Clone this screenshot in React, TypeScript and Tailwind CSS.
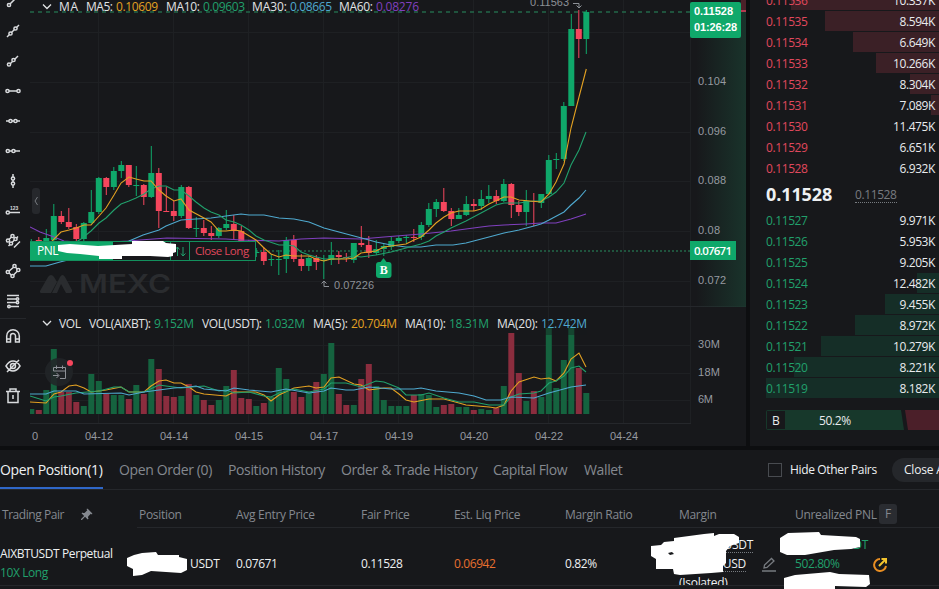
import type { ReactNode } from "react";
import { MdPushPin } from "react-icons/md";

const UP = "#0fa86a";
const DOWN = "#f6465d";

// [direction, high, bodyTop, bodyBottom, low, volumeTop]
type Candle = [1 | 0, number, number, number, number, number];

const candles: Candle[] = [
  [1, 239, 241, 246, 250, 409], [0, 237, 240, 247, 250, 410], [1, 229, 238, 250, 255, 390],
  [1, 204, 216, 240, 244, 349], [0, 211, 216, 222, 224, 392], [0, 208, 222, 227, 229, 392],
  [0, 224, 227, 239, 241, 402], [1, 222, 223, 239, 241, 406], [1, 190, 212, 223, 225, 374],
  [1, 177, 178, 212, 214, 381], [0, 177, 178, 187, 195, 394], [1, 167, 171, 187, 190, 395],
  [1, 161, 165, 171, 178, 395], [0, 165, 165, 185, 187, 399], [1, 166, 185, 186, 196, 385],
  [0, 184, 185, 197, 205, 394], [1, 146, 173, 197, 198, 359], [0, 168, 173, 211, 228, 369],
  [0, 187, 211, 212, 212, 396], [0, 201, 211, 216, 221, 397], [1, 185, 187, 216, 218, 396],
  [0, 186, 187, 228, 229, 384], [1, 217, 228, 229, 237, 395], [0, 220, 228, 233, 236, 400],
  [0, 226, 233, 236, 240, 405], [1, 227, 228, 236, 238, 400], [1, 210, 224, 228, 230, 386],
  [0, 215, 224, 231, 240, 370], [0, 226, 231, 241, 246, 398], [0, 240, 244, 252, 256, 399],
  [1, 248, 252, 253, 257, 406], [0, 247, 252, 261, 265, 403], [1, 254, 259, 260, 266, 397],
  [1, 250, 259, 260, 275, 368], [1, 237, 240, 259, 273, 379], [0, 235, 240, 259, 262, 392],
  [0, 254, 259, 266, 271, 397], [1, 256, 258, 266, 271, 393], [0, 255, 258, 262, 270, 382],
  [1, 255, 260, 261, 279, 374], [1, 242, 255, 260, 265, 343], [0, 251, 255, 257, 264, 394],
  [0, 253, 257, 258, 262, 405], [1, 243, 243, 260, 263, 405], [0, 226, 243, 245, 247, 379],
  [0, 236, 245, 253, 258, 364], [1, 240, 249, 253, 255, 386], [1, 244, 246, 249, 256, 400],
  [1, 237, 241, 247, 250, 406], [1, 236, 238, 241, 243, 406], [1, 235, 237, 238, 243, 406],
  [0, 229, 237, 238, 242, 395], [1, 222, 225, 237, 240, 394], [1, 203, 209, 225, 227, 395],
  [1, 199, 202, 209, 217, 407], [0, 188, 202, 211, 212, 405], [0, 208, 211, 219, 226, 404],
  [1, 208, 215, 219, 219, 407], [1, 196, 204, 215, 216, 407], [0, 199, 204, 206, 211, 410],
  [1, 190, 199, 206, 210, 409], [1, 185, 196, 199, 203, 410], [0, 190, 196, 201, 204, 408],
  [1, 179, 184, 201, 202, 386], [0, 183, 184, 205, 218, 333], [0, 201, 205, 212, 216, 373],
  [1, 190, 201, 212, 226, 401], [0, 193, 201, 202, 226, 391], [1, 194, 194, 203, 208, 397],
  [1, 155, 160, 194, 195, 328], [1, 153, 159, 160, 169, 388], [1, 102, 106, 159, 161, 360],
  [1, 14, 29, 106, 106, 328], [0, 10, 29, 39, 58, 368], [1, 10, 12, 39, 54, 393],
];

const lines = [
  { color: "#8040bf", points: "30,227 40,232 54,237 64,241 90,243 129,241 140,240 167,238 226,239 241,240 279,241 301,239 324,238 361,239 384,237 421,234 451,231 481,227 489,226 504,225 526,224 541,223 556,223 571,219 586,214" },
  { color: "#4fa9cf", points: "30,266 46,266 60,262 80,257 110,248 129,241 143,235 159,230 166,226 181,220 196,219 211,218 226,216 241,214 249,215 264,215 279,218 294,219 309,222 324,228 339,232 354,236 369,240 376,242 391,245 406,247 421,247 436,245 453,245 466,243 489,237 504,233 519,230 534,226 541,224 549,220 564,212 571,205 579,198 586,190" },
  { color: "#21a06c", points: "70,246 81,239 91,231 99,223 106,218 114,210 121,204 129,201 136,198 144,194 151,189 159,186 166,186 174,190 181,190 189,196 196,202 204,208 211,212 219,215 226,220 234,222 241,225 249,230 256,236 264,240 279,245 286,245 294,246 301,252 309,255 324,259 339,259 354,256 361,257 376,255 391,252 406,248 421,244 429,241 436,236 444,232 451,228 466,221 481,213 496,205 504,203 519,203 534,201 541,201 549,197 556,192 564,183 571,165 579,150 586,132" },
  { color: "#e3a122", points: "47,247 52,241 61,232 69,230 76,228 84,225 91,225 99,216 106,208 114,195 121,183 129,177 136,179 144,181 151,181 159,190 166,196 174,201 181,199 189,210 204,218 211,222 219,231 226,231 234,230 241,231 256,240 264,248 271,254 279,257 286,255 294,256 309,256 316,259 324,261 331,259 346,259 354,258 361,253 376,251 384,247 391,246 406,244 414,240 421,237 429,230 436,223 444,217 451,213 459,211 474,211 481,209 489,204 504,197 511,197 519,200 541,202 549,194 556,182 564,164 571,128 579,97 586.3,69" },
  { color: "#e3a122", points: "30,402 46,403 54,394 61,392 69,386 76,385 84,388 91,392 99,391 106,390 121,387 129,392 144,392 151,386 159,381 166,380 174,383 181,383 189,387 196,392 204,394 226,396 234,392 256,392 264,395 271,401 279,395 294,388 309,386 316,388 324,387 331,378 339,377 354,384 361,385 369,390 384,388 391,388 399,394 406,400 414,402 429,399 444,399 459,403 466,405 489,407 496,408 504,405 511,391 519,382 534,377 541,379 549,378 556,381 564,373 571,359 579,353 586,367" },
  { color: "#21a06c", points: "30,396 46,401 54,397 61,396 76,393 99,391 114,387 121,387 129,392 144,392 159,385 166,386 181,388 204,386 219,391 226,390 234,393 249,392 264,396 271,397 279,393 294,389 309,392 324,389 331,383 346,383 361,387 376,381 384,382 399,388 406,395 421,395 429,393 444,398 459,402 474,402 489,405 504,405 511,397 519,394 534,393 541,391 549,383 556,381 564,376 571,368 579,366 586,372" },
  { color: "#4fa9cf", points: "30,394 46,394 54,391 76,391 84,394 121,393 129,395 144,392 159,390 174,388 189,387 196,386 204,389 226,391 234,388 249,390 271,392 286,389 309,393 324,391 331,388 346,390 354,390 369,387 391,389 414,389 421,388 436,391 459,393 474,396 486,400 501,400 511,397 534,398 549,393 571,387 586,385" },
];

// [text, x, width, color]
type Legend = [string, number, number, string];

const maLegend: Legend[] = [
  ["MA", 59, 19, "#e1e3e5"],
  ["MA5:", 86, 27, "#e1e3e5"], ["0.10609", 116, 42, "#e3a122"],
  ["MA10:", 166, 34, "#e1e3e5"], ["0.09603", 203, 42, "#21a06c"],
  ["MA30:", 252, 35, "#e1e3e5"], ["0.08665", 290, 42, "#4fa9cf"],
  ["MA60:", 339, 34, "#e1e3e5"], ["0.08276", 376, 43, "#8040bf"],
];

const volLegend: Legend[] = [
  ["VOL", 59, 22, "#e1e3e5"],
  ["VOL(AIXBT):", 89, 62, "#e1e3e5"], ["9.152M", 154, 40, "#21a06c"],
  ["VOL(USDT):", 202, 60, "#e1e3e5"], ["1.032M", 265, 40, "#21a06c"],
  ["MA(5):", 313, 35, "#e1e3e5"], ["20.704M", 351, 46, "#e3a122"],
  ["MA(10):", 405, 41, "#e1e3e5"], ["18.31M", 449, 40, "#21a06c"],
  ["MA(20):", 497, 41, "#e1e3e5"], ["12.742M", 541, 46, "#4fa9cf"],
];

const priceAxis: [string, number, number][] = [
  ["0.104", 81, 28], ["0.096", 131, 28], ["0.088", 180, 28], ["0.08", 230, 22],
  ["0.072", 280, 28], ["30M", 344, 22], ["18M", 372, 22], ["6M", 399, 15],
];

const dateAxis: [string, number][] = [
  ["04-12", 99], ["04-14", 174], ["04-15", 249], ["04-17", 324],
  ["04-19", 399], ["04-20", 474], ["04-22", 549], ["04-24", 624],
];

const LegendRow = ({ items, y }: { items: Legend[]; y: number }) => (
  <g fontSize="12" className="font-['Open_Sans',sans-serif]">
    {items.map(([text, x, w, color]) => (
      <text key={x} x={x} y={y} fill={color} textLength={w} fontWeight={color === "#e1e3e5" ? 500 : 400}>
        {text}
      </text>
    ))}
  </g>
);

const Chart = () => (
  <svg width="716" height="446" viewBox="30 0 716 446" className="block font-['Liberation_Sans',Arial,sans-serif]">
    <defs>
      <linearGradient id="depth" x1="0" x2="1" y1="0" y2="0">
        <stop offset="0" stopColor="#1a3a2f" stopOpacity="0" />
        <stop offset="1" stopColor="#1a3a2f" stopOpacity="0.8" />
      </linearGradient>
    </defs>

    {/* Grid */}
    <g stroke="#1e2023" shapeRendering="crispEdges">
      {[99, 174, 249, 324, 399, 474, 549, 624, 691].map((x) => (
        <line key={x} x1={x - 0.5} x2={x - 0.5} y1="0" y2="423" />
      ))}
      {[32, 82, 132, 181, 231, 281, 345, 373, 400].map((y) => (
        <line key={y} x1="30" x2="691" y1={y + 0.5} y2={y + 0.5} />
      ))}
      <line x1="30" x2="746" y1="306.5" y2="306.5" stroke="#25272b" />
      <line x1="30" x2="691" y1="423.5" y2="423.5" stroke="#25272b" />
    </g>
    <rect x="696" y="12" width="50" height="295" fill="url(#depth)" />
    <rect x="741" y="0" width="5" height="10" fill="#4b2129" />
    <rect x="741" y="10" width="5" height="2" fill="#b53a50" />

    {/* Watermark */}
    <g fill="#2a2c2f">
      <path d="M40 291 L48 277 Q51 273 54 277 L57 282 L51 293 H42 Q39.500 293 40 291Z" />
      <path d="M52 293 L60 277 Q62.500 273 65 277 L72 290 Q72.500 293 70 293 H66 L61 284 L57 293Z" />
      <text x="79" y="293" fontSize="25" fontWeight="600" textLength="92" lengthAdjust="spacingAndGlyphs" className="font-[Inter,sans-serif]">
        MEXC
      </text>
    </g>

    {/* Volume */}
    {candles.map(([up, , , , , top], i) => (
      <rect key={i} x={28.3 + i * 7.5} y={top} width="6" height={414 - top} fill={up ? "#15633f" : "#8b2d3e"} />
    ))}
    <rect x="545" y="328" width="42" height="7" fill="#17181b" opacity="0.4" />

    {/* Price markers */}
    <line x1="30" x2="691" y1="12" y2="12" stroke="#23674a" strokeWidth="1.500" strokeDasharray="4 4" />
    <line x1="256" x2="691" y1="251" y2="251" stroke="#23674a" strokeWidth="1.500" strokeDasharray="2 2" />

    {/* Candles */}
    {candles.map(([up, high, top, bottom, low], i) => {
      const cx = 31.3 + i * 7.5;
      return (
        <g key={i} fill={up ? UP : DOWN}>
          <rect x={cx - 0.5} y={high} width="1" height={low - high} />
          <rect x={cx - 3} y={top} width="6" height={Math.max(1, bottom - top)} />
        </g>
      );
    })}

    {lines.map((l) => (
      <polyline key={l.points} points={l.points} fill="none" stroke={l.color} strokeWidth="1.100" />
    ))}

    {/* High and low notes */}
    <g fill="#8d9197" fontSize="11">
      <text x="530" y="6" textLength="39">0.11563</text>
      <text x="334" y="289" textLength="40">0.07226</text>
      <path d="M573 3.500H579V8M576.500 5.500L579 8L581.500 5.500M329 286.500H324V281M321.500 283.500L324 281L326.500 283.500" fill="none" stroke="#8d9197" />
    </g>

    <LegendRow items={maLegend} y={11} />
    <LegendRow items={volLegend} y={328} />
    <path d="M43 4.500L47 8.500L51 4.500M43 321L47 325L51 321" fill="none" stroke="#e1e3e5" strokeWidth="1.300" />

    {/* Axes */}
    <g fill="#969aa0" fontSize="11">
      {priceAxis.map(([text, y, w]) => (
        <text key={text} x="698" y={y + 4} textLength={w}>{text}</text>
      ))}
      {dateAxis.map(([text, x]) => (
        <text key={text} x={x - 14} y="440" textLength="28">{text}</text>
      ))}
      <text x="32" y="440">0</text>
    </g>

    {/* Current and entry price tags */}
    <rect x="690" y="2" width="51" height="36" rx="2" fill={UP} />
    <rect x="690" y="241" width="46" height="19" fill={UP} />
    <g fill="#fff" fontSize="11" fontWeight="700">
      <text x="694" y="15" textLength="39">0.11528</text>
      <text x="694" y="31" textLength="43">01:26:28</text>
      <text x="694" y="254.500" fontSize="11.500" fontWeight="600" textLength="38" className="font-['Open_Sans',sans-serif]">0.07671</text>
    </g>

    {/* Buy marker */}
    <path d="M383.500 258L386.500 262H380.500Z" fill={UP} />
    <rect x="376" y="262" width="15.500" height="16" rx="3" fill={UP} />
    <text x="383.700" y="273.500" fill="#fff" fontSize="12" fontWeight="700" textAnchor="middle" className="font-['Liberation_Serif',serif]">B</text>

    {/* Collapse handle */}
    <rect x="32" y="188" width="8" height="26" rx="3" fill="#26282c" />
    <path d="M37.500 197L35 201L37.500 205" fill="none" stroke="#777b80" />

    {/* Event badge */}
    <circle cx="59" cy="372" r="14" fill="#222428" fillOpacity="0.88" />
    <path d="M53.500 371V367.500H65.500V378.500H60M53.500 371H65.500M56.500 365.500V369M62.500 365.500V369M53 375.500H58.500M56.500 373L59 375.500L56.500 378" fill="none" stroke="#8d9197" />
    <circle cx="70" cy="363" r="3" fill={DOWN} />
  </svg>
);

// Entry line label with its order controls
const PositionTag = () => (
  <div className="absolute left-[30px] top-[241px] flex h-5 w-[226px] border-y border-r border-[#13905d] bg-[#17181b] font-['Open_Sans',sans-serif] text-[12px] leading-[18px]">
    <div className="w-[83px] bg-[#0fa86a] pl-[7px] tracking-[-0.5px] text-white">PNL</div>
    <div className="w-[57px]" />
    <div className="flex w-5 items-center justify-center border-x border-[#13905d]">
      <svg width="14" height="14" viewBox="0 0 14 14" fill="none" stroke="#21a06c">
        <path d="M4.500 12V3M2 5.500L4.500 3L6.500 5.500M10 3V12M8 9.500L10 12L12.500 9.500" />
      </svg>
    </div>
    <div className="flex-1 whitespace-nowrap pl-[5px] text-[11.5px] tracking-[-0.45px] text-[#e0485d]">Close Long</div>
    <svg width="120" height="20" viewBox="58 241 120 20" className="absolute left-[28px] -top-px">
      <path fill="#fff" d="M58 245L70 244L98 246L132 244V241H163L166 243L176 244V252L173 253V256L168 257L150 256H122V259H99V256L80 254L67 253L58 251Z" />
    </svg>
  </div>
);

const Tool = ({ children }: { children: ReactNode }) => (
  <div className="flex h-[30px] w-[26px] shrink-0 items-center justify-center">
    <svg width="16" height="16" viewBox="0 0 16 16" fill="none" stroke="#d9dbde" strokeWidth="1.500">
      {children}
    </svg>
  </div>
);

const Dot = ({ x, y }: { x: number; y: number }) => <circle cx={x} cy={y} r="1.600" fill="#17181b" />;

const Toolbar = () => (
  <div className="-mt-[14px] h-[460px] w-[30px] shrink-0">
    <Tool><path d="M5 11L14 2" /><Dot x={4} y={12} /></Tool>
    <Tool><path d="M2 14L14 2" /><Dot x={5.5} y={10.5} /><Dot x={10.5} y={5.5} /></Tool>
    <Tool><path d="M4 12L13 3" /><Dot x={4} y={11.5} /><Dot x={8.5} y={7} /></Tool>
    <Tool><path d="M3 8H13" /><Dot x={2.5} y={8} /><Dot x={13.5} y={8} /></Tool>
    <Tool><path d="M1 8H15" /><Dot x={5.5} y={8} /><Dot x={10.5} y={8} /></Tool>
    <Tool><path d="M3 8H15" /><Dot x={2.8} y={8} /><Dot x={8.5} y={8} /></Tool>
    <Tool><path d="M8 1V15" /><Dot x={8} y={5.5} /><Dot x={8} y={10.5} /></Tool>
    <Tool>
      <path d="M3 9.500H15" /><Dot x={2.8} y={9.5} />
      <text x="5" y="7" fill="#d9dbde" stroke="none" fontSize="5" fontWeight="700" className="font-['Liberation_Sans',sans-serif]">123</text>
    </Tool>
    {/* Parallel channel */}
    <Tool>
      <path d="M1.500 9L8 2.500M3.500 13L13 3.500M9 14.500L15 8.500" />
      <Dot x={3} y={7.5} /><Dot x={7.5} y={3} /><Dot x={6} y={10.5} /><Dot x={10.5} y={6} />
    </Tool>
    {/* Parallelogram */}
    <Tool>
      <path d="M3 9L9.500 3.500L13.500 7L7.500 13Z" />
      <Dot x={9.5} y={3} /><Dot x={13.3} y={7} /><Dot x={2.8} y={9} /><Dot x={7.5} y={13} />
    </Tool>
    <Tool>
      <path d="M2 2.500H14M2 6H14M2 9.500H14M2 13.500H14" /><circle cx="12.500" cy="6" r="1.200" fill="#17181b" /><circle cx="12.500" cy="9.500" r="1.200" fill="#17181b" /><circle cx="4" cy="13.500" r="1.200" fill="#17181b" />
    </Tool>
    <div className="my-[2px] h-px w-[26px] bg-[#25272b]" />
    <Tool>
      <path d="M1.700 14V8A6.300 6.300 0 0 1 14.300 8V14H10.500V8A2.500 2.500 0 0 0 5.500 8V14ZM1.700 11H5.500M10.500 11H14.300" />
    </Tool>
    <Tool>
      <path d="M1 8Q4 3 8 3Q12 3 15 8Q12 13 8 13Q4 13 1 8ZM14 2L2 14" /><circle cx="8" cy="8" r="2.500" />
    </Tool>
    <Tool>
      <path d="M1 3.500H15M5 3V1H11V3M3 3.500V14.500H13V3.500M8 7V11" />
    </Tool>
  </div>
);

// [price, size, left edge of the depth bar]
const asks: [string, string, number][] = [
  ["0.11536", "10.337K", 41], ["0.11535", "8.594K", 75], ["0.11534", "6.649K", 103],
  ["0.11533", "10.266K", 126], ["0.11532", "8.304K", 160], ["0.11531", "7.089K", 181],
  ["0.11530", "11.475K", 189], ["0.11529", "6.651K", 189], ["0.11528", "6.932K", 189],
];

const bids: [string, string, number][] = [
  ["0.11527", "9.971K", 189], ["0.11526", "5.953K", 189], ["0.11525", "9.205K", 189],
  ["0.11524", "12.482K", 167], ["0.11523", "9.455K", 135], ["0.11522", "8.972K", 105],
  ["0.11521", "10.279K", 71], ["0.11520", "8.221K", 44], ["0.11519", "8.182K", 16],
];

const BookRow = ({ row, side }: { row: [string, string, number]; side: "ask" | "bid" }) => (
  <div className="relative mb-px flex h-5 shrink-0 items-center justify-between pl-4 pr-1 pt-[2px] text-[12px] tracking-[-0.4px]">
    <div
      className={`absolute right-0 top-0 h-full ${side === "ask" ? "bg-[#3b2026]" : "bg-[#152e27]"}`}
      style={{ width: 189 - row[2] }}
    />
    <span className={`relative ${side === "ask" ? "text-[#e0485d]" : "text-[#21a06c]"}`}>{row[0]}</span>
    <span className="relative font-medium text-[#e9ebed]">{row[1]}</span>
  </div>
);

const OrderBook = () => (
  <div className="flex h-[446px] w-[189px] flex-col overflow-hidden bg-[#17181b]">
    <div className="-mt-[10px]">
      {asks.map((r) => <BookRow key={r[0]} row={r} side="ask" />)}
    </div>
    <div className="flex h-[31px] items-center pl-4">
      <span className="w-[89px] text-[18px] font-bold tracking-[-0.1px] text-[#eef0f2]">0.11528</span>
      <span className="border-b border-dotted border-[#777b80] text-[12px] leading-[15px] tracking-[-0.4px] text-[#777b80]">0.11528</span>
    </div>
    <div>
      {bids.map((r) => <BookRow key={r[0]} row={r} side="bid" />)}
    </div>
    <div className="relative ml-4 mt-[11px] h-5">
      <svg width="173" height="20" viewBox="0 0 173 20" className="block">
        <path d="M0 2Q0 0 2 0H135L138 20H2Q0 20 0 18Z" fill="#17382b" />
        <path d="M139 0H173V20H142Z" fill="#4b1f29" />
        <rect x="1" y="1" width="18" height="18" fill="#17181b" />
      </svg>
      <div className="absolute inset-0 flex items-center pt-px text-[12px] font-medium tracking-[-0.4px] text-[#e9ebed]">
        <span className="w-[53px] pl-[6px]">B</span>
        <span>50.2%</span>
      </div>
    </div>
  </div>
);

const tabs: [string, string][] = [
  ["Open Order (0)", "w-[109px]"],
  ["Position History", "w-[113px]"],
  ["Order & Trade History", "w-[152px]"],
  ["Capital Flow", "w-[91px]"],
  ["Wallet", "w-[50px]"],
];

const Positions = () => (
  <div className="relative h-[139px] overflow-hidden whitespace-nowrap bg-[#17181b] text-[12px] tracking-[-0.3px]">
    {/* Tabs */}
    <div className="flex h-[40px] items-center border-b border-[#25272b] text-[14px] tracking-[-0.37px] text-[#84888f]">
      <div className="flex h-[39px] w-[103px] shrink-0 items-center border-b-2 border-[#2f67c8] pt-[2px] text-[#eef0f2]">Open Position(1)</div>
      <div className="ml-4 flex shrink-0">
        {tabs.map(([label, width]) => <span key={label} className={width}>{label}</span>)}
      </div>
      <div className="ml-[134px] size-[14px] shrink-0 border border-[#484b50]" />
      <span className="ml-2 w-[102px] shrink-0 pt-px text-[12px] tracking-[-0.35px] text-[#eef0f2]">Hide Other Pairs</span>
      <button className="h-6 w-[90px] shrink-0 rounded-full bg-[#25272b] pl-3 text-left text-[12px] tracking-[-0.2px] text-[#eef0f2]">Close All</button>
    </div>

    {/* Column titles */}
    <div className="flex h-[38px] text-[#84888f]">
      <div className="flex w-[137px] items-center pl-[2px] pt-[12px]">
        <span className="w-[76px] tracking-[-0.45px]">Trading Pair</span>
        <MdPushPin size={15} className="rotate-45 text-[#84888f]" />
      </div>
      <div className="flex flex-1 items-center border-b border-[#25272b] pl-[2px] pt-[13px]">
        <span className="w-[97px]">Position</span>
        <span className="w-[125px]">Avg Entry Price</span>
        <span className="w-[93px]">Fair Price</span>
        <span className="w-[111px]">Est. Liq Price</span>
        <span className="w-[114px]">Margin Ratio</span>
        <span className="w-[116px]">Margin</span>
        <span className="w-[84px]">Unrealized PNL</span>
        <span className="-mt-[2px] flex h-5 w-[18px] items-center justify-center rounded-[3px] bg-[#2a2c31]">F</span>
      </div>
    </div>

    {/* Position row */}
    <div className="flex h-[58px] overflow-hidden border-b border-[#25272b] text-[#eef0f2]">
      <div className="w-[137px] pt-[16px] leading-[19px]">
        <div className="tracking-[-0.4px]">AIXBTUSDT Perpetual</div>
        <div className="tracking-[-0.4px] text-[#21a06c]">10X Long</div>
      </div>
      <div className="flex pt-[26px] leading-[19px]">
        <span className="w-[99px] pl-[53px]">USDT</span>
        <span className="w-[125px] tracking-[-0.4px]">0.07671</span>
        <span className="w-[93px] tracking-[-0.4px]">0.11528</span>
        <span className="w-[111px] tracking-[-0.4px] text-[#e8702f]">0.06942</span>
        <span className="w-[114px] tracking-[-0.4px]">0.82%</span>
      </div>
      <div className="w-[83px] pt-[9px] leading-[15px]">
        <div className="w-[74px] border-b border-dotted border-[#777b80] text-right">USDT</div>
        <div className="mt-[3px] w-[67px] border-b border-dotted border-[#777b80] text-right">USD</div>
        <div className="mt-[3px]">(Isolated)</div>
      </div>
      <svg width="14" height="15" viewBox="0 0 14 15" fill="none" stroke="#777b80" strokeWidth="1.300" className="mt-[29px]">
        <path d="M0 14H14M2 11L2.500 8L9.500 1.500L12 4L5 10.500Z" />
      </svg>
      <div className="ml-[19px] w-[77px] pt-[7px] leading-[19px] text-[#21a06c]">
        <div className="w-[73px] text-right">USDT</div>
        <div className="tracking-[-0.4px]">502.80%</div>
      </div>
      <svg width="16" height="16" viewBox="0 0 16 16" fill="none" stroke="#e98e22" strokeWidth="2" className="mt-[29px]">
        <path d="M8 2A6 6 0 1 0 14 9" />
        <path d="M7 9L13 3M9.500 2H14V6.500" stroke="#f2c32e" />
      </svg>
    </div>

    {/* Masked amounts */}
    <svg width="939" height="139" viewBox="0 450 939 139" className="pointer-events-none absolute left-0 top-0" fill="#fff">
      <path d="M127 558L134 555L142 553L156 552L158 555H179V557L187 559V570L181 573L151 571L142 575L133 576V569L127 566Z" />
      <path fillRule="evenodd" d="M651 546L661 545L664 542L674 541V538L704 534L714 533V536L719 534H734L739 537V543L730 546L726 551V563L723 566V572L711 573L680 575L674 574L673 569H656V559L651 556ZM668 553L672 552L674 554L670 555Z" />
      <path d="M780 538L788 533L819 532L821 535L856 537L860 539V547L851 549L834 550L805 555H787L780 552Z" />
      <path d="M784 578L795 575L830 572L839 574L869 575L870 584L866 587L835 586V589H784Z" />
    </svg>
  </div>
);

export default function App() {
  return (
    <div className="flex h-[589px] w-[939px] flex-col gap-1 overflow-hidden bg-[#0d0e10] font-['Open_Sans','Noto_Sans',sans-serif]">
      <div className="flex h-[446px] gap-1">
        <div className="relative flex w-[746px] shrink-0 overflow-hidden bg-[#17181b]">
          <Toolbar />
          <Chart />
          <PositionTag />
        </div>
        <OrderBook />
      </div>
      <Positions />
    </div>
  );
}
